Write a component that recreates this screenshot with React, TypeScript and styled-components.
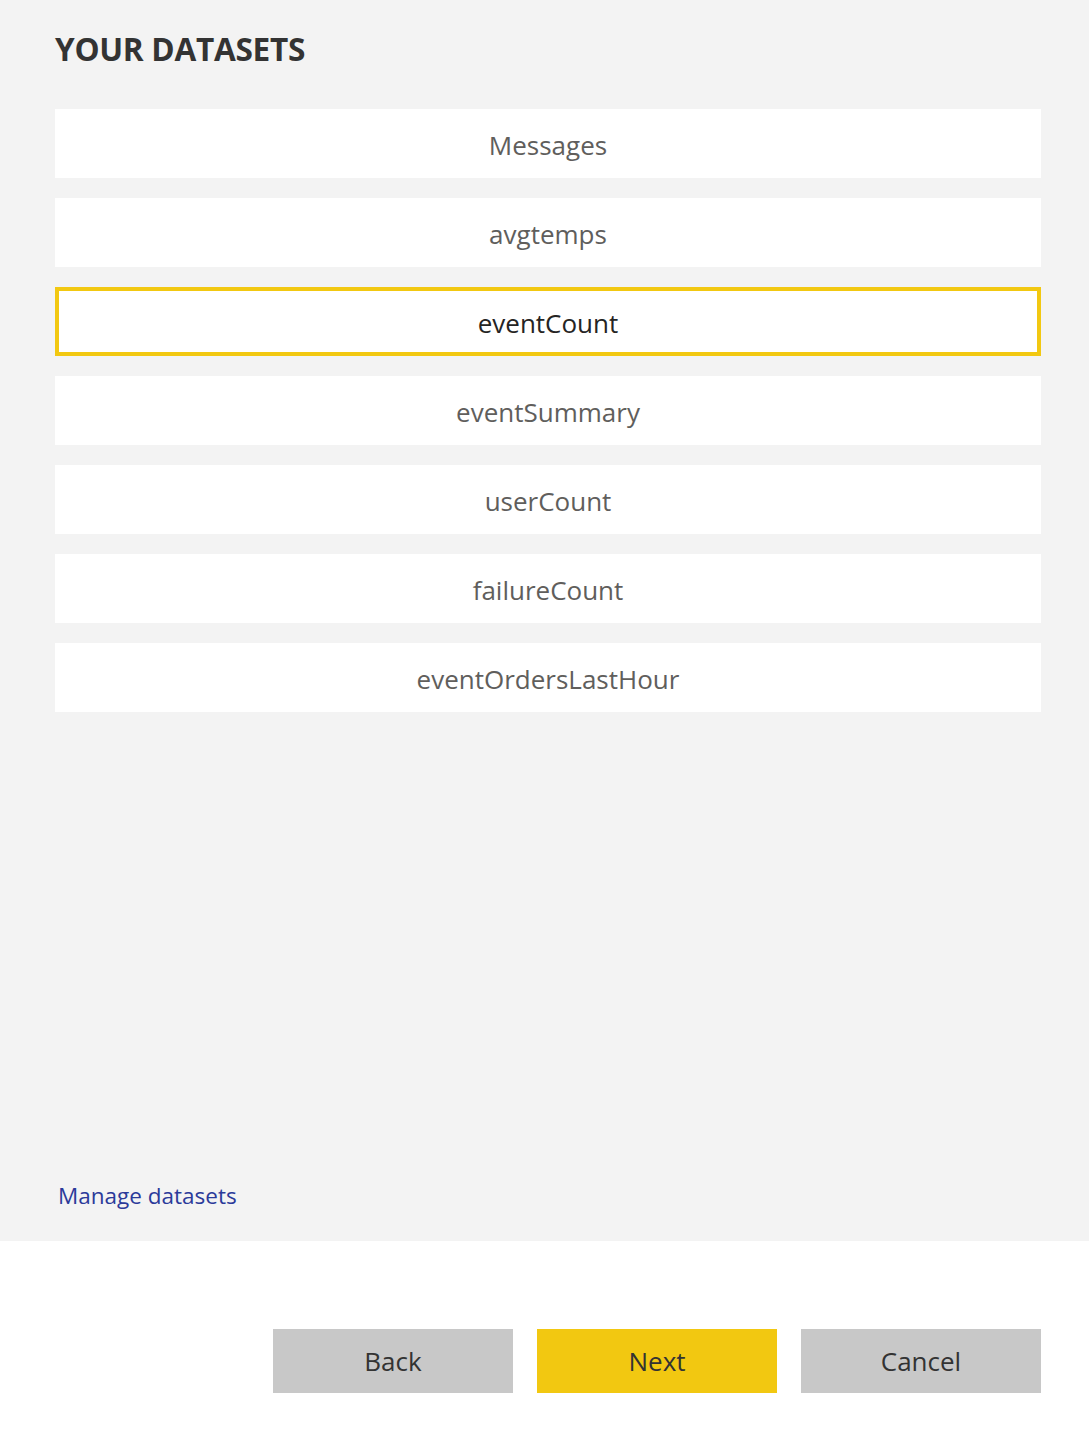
import React from 'react';
import styled, { createGlobalStyle } from 'styled-components';

const GlobalStyle = createGlobalStyle`
  html, body {
    margin: 0;
    padding: 0;
    background: #ffffff;
  }
  body {
    font-family: "Segoe UI", "Open Sans", "Noto Sans", sans-serif;
  }
`;

const Page = styled.div`
  display: flex;
  flex-direction: column;
  width: 1089px;
  height: 1431px;
`;

const Panel = styled.section`
  display: flex;
  flex-direction: column;
  height: 1241px;
  box-sizing: border-box;
  padding: 27px 48px 30px 55px;
  background: #f3f3f3;
`;

const Title = styled.h1`
  margin: 0 0 38px;
  font-size: 31.6px;
  line-height: 44px;
  font-weight: 700;
  color: #333333;
  letter-spacing: -0.3px;
`;

const DatasetList = styled.ul`
  display: flex;
  flex-direction: column;
  gap: 20px;
  margin: 0;
  padding: 0;
  flex: 1;
`;

const DatasetItem = styled.li<{ selected?: boolean }>`
  list-style: none;
  display: flex;
  align-items: center;
  justify-content: center;
  height: 69px;
  box-sizing: border-box;
  padding-top: 2px;
  background: #ffffff;
  border: 4px solid ${props => props.selected ? '#f2c811' : '#ffffff'};
  font-size: 26px;
  color: ${props => props.selected ? '#252423' : '#605e5c'};
  cursor: pointer;
`;

const ManageLink = styled.a`
  align-self: flex-start;
  margin-left: 3px;
  font-size: 22.5px;
  line-height: 30px;
  color: #2b3a9a;
  text-decoration: none;
`;

const Footer = styled.footer`
  display: flex;
  justify-content: flex-end;
  gap: 24px;
  padding: 88px 48px 0 0;
`;

const Button = styled.button<{ primary?: boolean }>`
  width: 240px;
  height: 64px;
  border: none;
  background: ${props => props.primary ? '#f2c811' : '#c8c8c8'};
  color: #333333;
  font-family: inherit;
  font-size: 26px;
  cursor: pointer;
`;

const datasets = [
  'Messages',
  'avgtemps',
  'eventCount',
  'eventSummary',
  'userCount',
  'failureCount',
  'eventOrdersLastHour',
];

const App: React.FC = () => (
  <Page>
    <GlobalStyle />
    <Panel>
      <Title>YOUR DATASETS</Title>
      <DatasetList>
        {datasets.map(name => (
          <DatasetItem key={name} selected={name === 'eventCount'}>{name}</DatasetItem>
        ))}
      </DatasetList>
      <ManageLink href="#">Manage datasets</ManageLink>
    </Panel>
    <Footer>
      <Button>Back</Button>
      <Button primary>Next</Button>
      <Button>Cancel</Button>
    </Footer>
  </Page>
);

export default App;
